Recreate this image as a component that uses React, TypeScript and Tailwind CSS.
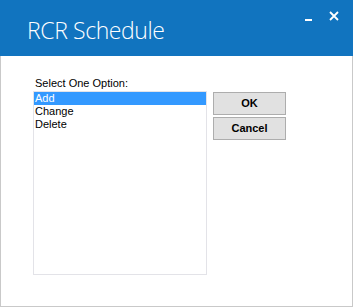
export default function App() {
  const items = ['Add', 'Change', 'Delete']
  const selected = 0

  return (
    <div className="w-[353px] h-[307px] flex flex-col bg-white border border-t-0 border-[#c9c9c9] font-['Liberation_Sans',Arial,sans-serif]">
      {/* title bar */}
      <div className="relative h-[56px] shrink-0 bg-[#1174bf] -mx-px">
        <div className="pl-[27px] pt-[15px] text-[23px] leading-[30px] font-light text-white font-['Open_Sans',sans-serif] tracking-[-0.4px]">
          RCR Schedule
        </div>
        <div className="absolute top-[11px] right-[14px] flex items-center gap-[17px]">
          <div className="w-[7px] h-[2px] bg-white mt-[7px]" />
          <svg width="10" height="10" viewBox="0 0 10 10">
            <path d="M1 1L9 9M9 1L1 9" stroke="white" strokeWidth="1.8" />
          </svg>
        </div>
      </div>

      {/* body */}
      <div className="flex pl-[32px] pt-[21px] gap-[6px]">
        <div className="flex flex-col">
          <div className="text-[11px] leading-[13px] text-black pl-[2px] h-[14px]">Select One Option:</div>
          <div className="w-[174px] h-[184px] border border-[#e3e3e8] bg-white">
            {items.map((item, i) => (
              <div
                key={item}
                className={`h-[13px] text-[11px] leading-[13px] pl-[1px] ${
                  i === selected ? 'bg-[#3399ff] text-white' : 'text-black'
                }`}
              >
                {item}
              </div>
            ))}
          </div>
        </div>
        <div className="flex flex-col gap-[2px] pt-[15px]">
          <button className="w-[73px] h-[23px] bg-[#e1e1e1] border border-[#adadad] text-[11px] font-bold text-black">
            OK
          </button>
          <button className="w-[73px] h-[23px] bg-[#e1e1e1] border border-[#adadad] text-[11px] font-bold text-black">
            Cancel
          </button>
        </div>
      </div>
    </div>
  )
}
